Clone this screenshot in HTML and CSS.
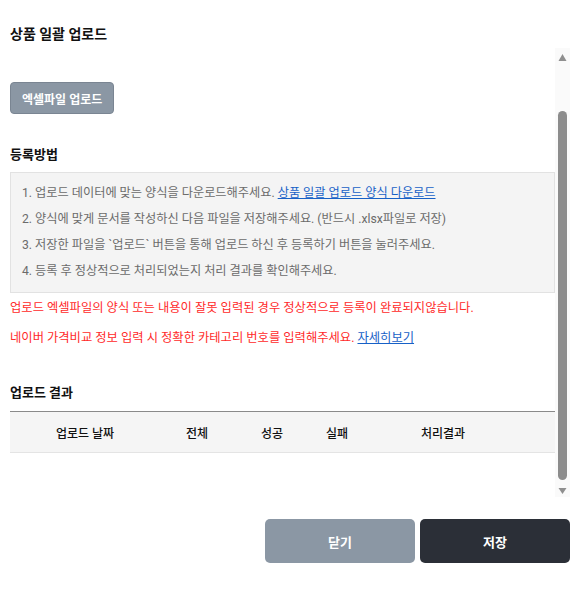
FILE: index.html
```html
<!DOCTYPE html>
<html lang="ko">
<head>
<meta charset="utf-8">
<title>상품 일괄 업로드</title>
<link rel="stylesheet" href="styles.css">
</head>
<body>
<div class="modal">
  <h1 class="modal-title">상품 일괄 업로드</h1>
  <div class="modal-body">
    <div class="scroll-content" id="scrollContent">
      <div class="upload-row">
        <button class="btn-upload" type="button">엑셀파일 업로드</button>
      </div>
      <h2 class="section-title">등록방법</h2>
      <ol class="guide">
        <li>1. 업로드 데이터에 맞는 양식을 다운로드해주세요. <a class="link" href="#">상품 일괄 업로드 양식 다운로드</a></li>
        <li>2. 양식에 맞게 문서를 작성하신 다음 파일을 저장해주세요. (반드시 .xlsx파일로 저장)</li>
        <li>3. 저장한 파일을 `업로드` 버튼을 통해 업로드 하신 후 등록하기 버튼을 눌러주세요.</li>
        <li>4. 등록 후 정상적으로 처리되었는지 처리 결과를 확인해주세요.</li>
      </ol>
      <p class="warn">업로드 엑셀파일의 양식 또는 내용이 잘못 입력된 경우 정상적으로 등록이 완료되지않습니다.</p>
      <p class="warn warn-2">네이버 가격비교 정보 입력 시 정확한 카테고리 번호를 입력해주세요. <a class="link" href="#">자세히보기</a></p>
      <h2 class="section-title result-title">업로드 결과</h2>
      <div class="result-table">
        <div class="th">업로드 날짜</div>
        <div class="th">전체</div>
        <div class="th">성공</div>
        <div class="th">실패</div>
        <div class="th th-last">처리결과</div>
      </div>
    </div>
    <div class="scrollbar" aria-hidden="true">
      <div class="sb-btn sb-up">
        <svg width="15" height="16" viewBox="0 0 15 16"><polygon points="7.5,6 11.5,13 3.5,13" fill="#8f8f8f"/></svg>
      </div>
      <div class="sb-track"><div class="sb-thumb"></div></div>
      <div class="sb-btn sb-down">
        <svg width="15" height="16" viewBox="0 0 15 16"><polygon points="3.5,7 11.5,7 7.5,13" fill="#8f8f8f"/></svg>
      </div>
    </div>
  </div>
  <div class="modal-footer">
    <button class="btn btn-close" type="button">닫기</button>
    <button class="btn btn-save" type="button">저장</button>
  </div>
</div>
<script src="script.js"></script>
</body>
</html>
```
FILE: styles.css
```css
* { box-sizing: border-box; }
html, body { margin: 0; padding: 0; background: #fff; }
body {
  font-family: Roboto, "Noto Sans CJK KR", sans-serif;
  color: #111;
}
.modal {
  padding: 24px 10px 0 10px;
  width: 580px;
}
.modal-title {
  margin: 0;
  font-size: 14px;
  line-height: 20px;
  font-weight: 700;
  color: #111;
}
.modal-body {
  margin-top: 4px;
  height: 449px;
  display: flex;
}
.scroll-content {
  flex: 1;
  min-width: 0;
  overflow: hidden;
  padding-top: 88px;
  padding-bottom: 44px;
}
.upload-row { display: flex; }
.btn-upload {
  height: 32px;
  padding: 0 11px;
  border: 1px solid #7a8592;
  border-radius: 4px;
  background: #8b97a4;
  color: #fff;
  font-family: inherit;
  font-size: 12px;
  font-weight: 700;
}
.section-title {
  margin: 31px 0 0 0;
  font-size: 13px;
  line-height: 20px;
  font-weight: 700;
  color: #111;
}
.guide {
  list-style: none;
  margin: 7px 0 0 0;
  padding: 7px 11px 8px 11px;
  background: #f4f4f4;
  border: 1px solid #e2e2e2;
  font-size: 12.2px;
  line-height: 26px;
  color: #6b6b6b;
}
.link { color: #1761c7; text-decoration: underline; }
.warn {
  margin: 5px 0 0 0;
  font-size: 12.3px;
  line-height: 20px;
  color: #ff2a2a;
}
.warn-2 { margin-top: 10px; }
.result-title { margin-top: 35px; }
.result-table {
  margin-top: 8px;
  display: grid;
  grid-template-columns: 150px 74px 76px 54px 1fr;
  height: 42px;
  align-items: center;
  background: #f5f5f5;
  border-top: 1px solid #8a8a8a;
  border-bottom: 1px solid #e4e4e4;
}
.th {
  text-align: center;
  font-size: 12px;
  font-weight: 500;
  color: #111;
}
.th-last { padding-right: 33px; }
.scrollbar {
  width: 15px;
  flex: none;
  display: flex;
  flex-direction: column;
  background: #fafafa;
}
.sb-btn { height: 16px; flex: none; }
.sb-btn svg { display: block; }
.sb-track { flex: 1; padding-top: 47px; }
.sb-thumb {
  width: 9px;
  height: 369px;
  margin-left: 3px;
  border-radius: 5px;
  background: #8c8c8c;
}
.modal-footer {
  margin-top: 22px;
  display: flex;
  justify-content: flex-end;
  gap: 5px;
}
.btn {
  width: 150px;
  height: 44px;
  border: none;
  border-radius: 5px;
  color: #fff;
  font-family: inherit;
  font-size: 13px;
  font-weight: 700;
}
.btn-close { background: #8b97a4; }
.btn-save { background: #2b2f37; }
```
FILE: script.js
```js
var content = document.getElementById('scrollContent');
content.scrollTop = content.scrollHeight;
```
